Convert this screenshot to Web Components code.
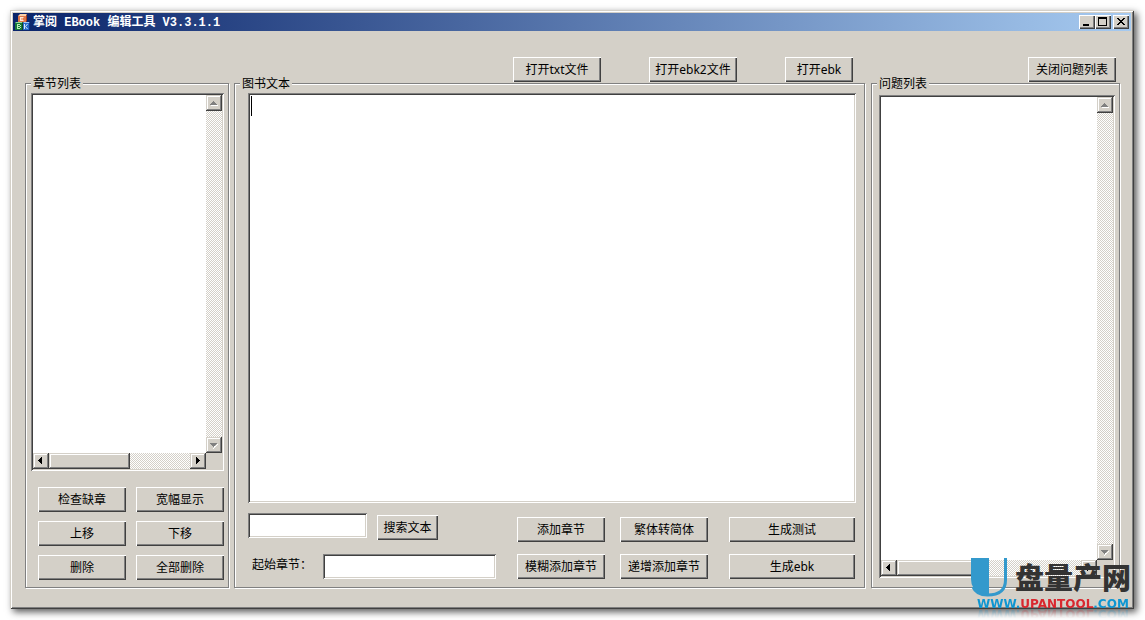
<!DOCTYPE html>
<html lang="zh-CN">
<head>
<meta charset="utf-8">
<title>掌阅 EBook 编辑工具 V3.3.1.1</title>
<style>
  body { margin: 0; background: #fff; color: #000; font: 12px/14px "Noto Sans", "Noto Sans CJK SC", sans-serif; }
</style>
</head>
<body>
<ebook-editor></ebook-editor>
<script>
const define = (name, html, setup) => {
  const template = document.createElement('template');
  template.innerHTML = html;
  customElements.define(name, class extends HTMLElement {
    constructor() {
      super();
      this.attachShadow({ mode: 'open' }).append(template.content.cloneNode(true));
    }
    connectedCallback() { if (setup) setup(this, this.shadowRoot); }
  });
};

/* Raised push button */
define('classic-button', `
  <style>
    :host { display: block; width: 88px; height: 25px; }
    button { display: flex; align-items: center; justify-content: center; box-sizing: border-box; width: 100%; height: 100%;
      margin: 0; padding: 0; border: 0; background: #d4d0c8; color: inherit; font: inherit; white-space: nowrap;
      box-shadow: inset 1px 1px #fff, inset -1px -1px #404040, inset -2px -2px #808080; }
  </style>
  <button type="button"><slot></slot></button>`);

/* Etched frame with a caption */
define('group-box', `
  <style>
    :host { display: flex; min-width: 0; }
    fieldset { flex: 1; display: flex; flex-direction: column; box-sizing: border-box; min-width: 0; margin: 0;
      padding: 0; border: 1px solid #808080; box-shadow: 1px 1px #fff, inset 1px 1px #fff; }
    legend { margin-left: 5px; padding: 0 2px; height: 13px; background: #d4d0c8; }
    .content { flex: 1; display: flex; flex-direction: column; min-width: 0; padding: var(--pad, 0); }
  </style>
  <fieldset><legend></legend><div class="content"><slot></slot></div></fieldset>`,
  (host, root) => { root.querySelector('legend').textContent = host.getAttribute('caption'); });

/* Scroll bar, vertical unless it has the "horizontal" attribute */
define('scroll-bar', `
  <style>
    :host { display: flex; flex-direction: column; width: 16px; color: #808080;
      background: conic-gradient(#fff 25%, #d4d0c8 0 50%, #fff 0 75%, #d4d0c8 0) 0 0 / 2px 2px; }
    :host([horizontal]) { flex-direction: row; width: auto; height: 16px; color: #000; }
    button, .thumb { box-sizing: border-box; margin: 0; padding: 0; border: 0; background: #d4d0c8; color: inherit;
      box-shadow: inset -1px -1px #404040, inset 1px 1px #d4d0c8, inset -2px -2px #808080, inset 2px 2px #fff; }
    button { flex: none; width: 16px; height: 16px; }
    svg { display: block; width: 16px; height: 16px; }
    .thumb { display: none; }
    :host([horizontal]) .thumb { display: block; width: 81px; }
    .space { flex: 1; }
    .v, :host([horizontal]) .h { display: block; }
    .h, :host([horizontal]) .v { display: none; }
  </style>
  <button type="button" aria-label="向前滚动">
    <svg viewBox="0 0 16 16" fill="currentColor" shape-rendering="crispEdges">
      <g class="v"><path d="M5 10h7v1H5z" fill="#fff"/><path d="M7 6h1v1H7zM6 7h3v1H6zM5 8h5v1H5zM4 9h7v1H4z"/></g>
      <g class="h"><path d="M5 7h1v1H5zM6 6h1v3H6zM7 5h1v5H7zM8 4h1v7H8z"/></g>
    </svg></button>
  <div class="thumb"></div><div class="space"></div>
  <button type="button" aria-label="向后滚动">
    <svg viewBox="0 0 16 16" fill="currentColor" shape-rendering="crispEdges">
      <g class="v"><path d="M11 7h1v1h-1v1h-1v1H9v1H8v1H7v-1h1V9h2V8h1z" fill="#fff"/><path d="M4 6h7v1H4zM5 7h5v1H5zM6 8h3v1H6zM7 9h1v1H7z"/></g>
      <g class="h"><path d="M6 4h1v7H6zM7 5h1v5H7zM8 6h1v3H8zM9 7h1v1H9z"/></g>
    </svg></button>`);

/* Sunken list with both scroll bars */
define('list-box', `
  <style>
    :host { display: grid; grid-template: 1fr 16px / 1fr 16px; box-sizing: border-box; padding: 2px; background: #d4d0c8;
      box-shadow: inset 1px 1px #808080, inset -1px -1px #fff, inset 2px 2px #404040, inset -2px -2px #d4d0c8; }
    .items { background: #fff; }
  </style>
  <div class="items" role="listbox"></div>
  <scroll-bar></scroll-bar>
  <scroll-bar horizontal></scroll-bar>`,
  (host, root) => root.querySelector('.items').setAttribute('aria-label', host.getAttribute('label')));

define('title-bar', `
  <style>
    :host { display: flex; align-items: center; height: 18px; padding: 0 2px; color: #fff;
      background: linear-gradient(90deg, #0a246a, #a6caf0); }
    .icon { width: 16px; height: 16px; }
    h1 { flex: 1; margin: 0 0 0 2px; padding-top: 2px; font: bold 12px/18px "Liberation Mono", "Noto Sans CJK SC", monospace; white-space: nowrap; }
    button { width: 16px; height: 14px; margin: 0; padding: 0; border: 0; background: #d4d0c8;
      box-shadow: inset 1px 1px #fff, inset -1px -1px #404040, inset -2px -2px #808080; }
    button svg { display: block; width: 16px; height: 14px; }
    button:last-child { margin-left: 2px; }
  </style>
  <svg class="icon" viewBox="0 0 16 16" aria-hidden="true">
    <path d="M3 2l2-2h7l-1 2z" fill="#fbd0a8"/><path d="M3 2h8v6H3z" fill="#e07848"/><path d="M11 2l1-2v7l-1 1z" fill="#a84020"/>
    <path d="M5.500 3v4M5 3.500h3.500M5 5h3M5 6.500h3.500" stroke="#ffe8d8" fill="none"/>
    <path d="M0 9l1-1h6l1 1z" fill="#8fdc98"/><path d="M0 9h7v7H0z" fill="#187838"/><path d="M7 9l1-1v7l-1 1z" fill="#0b4c20"/>
    <path d="M2.500 10v5M2 10.500h3M2 12.500h3M2 14.500h3M5.500 11v1M5.500 13v1" stroke="#b8f0b8" fill="none"/>
    <path d="M8 9l1-1h6l-1 1z" fill="#9cc8fc"/><path d="M8 9h6v7H8z" fill="#2468c8"/><path d="M14 9l1-1v7l-1 1z" fill="#0c3484"/>
    <path d="M9.500 10v5M12.500 10l-2 2.500 2 2.500" stroke="#d0e8ff" fill="none"/>
  </svg>
  <h1>掌阅 EBook 编辑工具 V3.3.1.1</h1>
  <button type="button" aria-label="最小化"><svg viewBox="0 0 16 14"><path d="M4 9h6v2H4z"/></svg></button>
  <button type="button" aria-label="最大化"><svg viewBox="0 0 16 14" shape-rendering="crispEdges"><path fill-rule="evenodd" d="M3 2h9v9H3zM4 4v6h7V4z"/></svg></button>
  <button type="button" aria-label="关闭"><svg viewBox="0 0 16 14" shape-rendering="crispEdges"><path d="M4 3h2v1H4zM10 3h2v1h-2zM5 4h2v1H5zM9 4h2v1H9zM6 5h4v1H6zM7 6h2v1H7zM6 7h4v1H6zM5 8h2v1H5zM9 8h2v1H9zM4 9h2v1H4zM10 9h2v1h-2z"/></svg></button>`);

define('text-pane', `
  <style>
    :host { display: flex; position: relative; }
    textarea { flex: 1; box-sizing: border-box; min-width: 0; margin: 0; padding: 3px; border: 0; outline: 0; resize: none;
      background: #fff; font: inherit;
      box-shadow: inset 1px 1px #808080, inset -1px -1px #fff, inset 2px 2px #404040, inset -2px -2px #d4d0c8; }
    .caret { position: absolute; left: 3px; top: 3px; width: 1px; height: 20px; background: #000; }
  </style>
  <textarea aria-label="图书文本"></textarea><span class="caret"></span>`);

define('search-form', `
  <style>
    :host { display: flex; justify-content: space-between; align-items: flex-end; }
    .fields { display: flex; flex-direction: column; gap: 14px; }
    .search { display: flex; gap: 10px; height: 27px; }
    .search classic-button { width: 61px; align-self: flex-end; }
    .start { display: flex; }
    label { box-sizing: border-box; width: 75px; padding: 4px 0 0 4px; white-space: nowrap; }
    input { box-sizing: border-box; height: 25px; width: 119px; margin: 0; padding: 2px 4px; border: 0; outline: 0; background: #fff; font: inherit;
      box-shadow: inset 1px 1px #808080, inset -1px -1px #fff, inset 2px 2px #404040, inset -2px -2px #d4d0c8; }
    .start input { width: 173px; }
    .actions { display: grid; grid-template-columns: 88px 88px 132px; gap: 12px 15px; }
    .wide { width: auto; margin-left: 6px; }
  </style>
  <div class="fields">
    <div class="search"><input type="text" aria-label="搜索文本"><classic-button>搜索文本</classic-button></div>
    <div class="start"><label for="start">起始章节：</label><input type="text" id="start"></div>
  </div>
  <div class="actions">
    <classic-button>添加章节</classic-button><classic-button>繁体转简体</classic-button><classic-button class="wide">生成测试</classic-button>
    <classic-button>模糊添加章节</classic-button><classic-button>递增添加章节</classic-button><classic-button class="wide">生成ebk</classic-button>
  </div>`);

/* Site logo lying over the lower right corner */
define('site-mark', `
  <style>
    :host { display: block; width: 162px; pointer-events: none; }
    .top { display: flex; align-items: flex-start; gap: 7px; }
    svg { flex: none; width: 37px; height: 39px; }
    .name { color: #333; font: 900 29px/36px "Noto Sans CJK SC", sans-serif; white-space: nowrap; }
    .url { display: flex; margin-left: 6px; color: #0e96d2; font: bold 12px/14px "DejaVu Sans", sans-serif;
      -webkit-box-reflect: below -4px linear-gradient(transparent 20%, rgba(0, 0, 0, .3)); }
    b { color: #d9272e; }
  </style>
  <div class="top">
    <svg viewBox="0 0 37 39" aria-hidden="true">
      <path d="M0 0h18v37q-5 0-9-2-9-4-9-14z" fill="#3399cc"/>
      <path d="M34.500 0v22c0 10-6 15-18 15C9 37 4 34 2 29" fill="none" stroke="#3399cc" stroke-width="3"/>
    </svg>
    <span class="name">盘量产网</span>
  </div>
  <div class="url"><span>WWW.</span><b>UPANTOOL</b><span>.COM</span></div>`);

define('ebook-editor', `
  <style>
    :host { display: flex; position: relative; box-sizing: border-box; min-height: 100vh; padding: 10px 11px 11px 10px; overflow: hidden; }
    .window { flex: 1; display: flex; flex-direction: column; box-sizing: border-box; min-width: 0; padding: 3px; background: #d4d0c8;
      box-shadow: inset 1px 1px #d4d0c8, inset -1px -1px #404040, inset 2px 2px #fff, inset -2px -2px #808080, 3px 3px 7px rgba(0, 0, 0, .65); }
    main { flex: 1; display: grid; grid-template: auto 1fr / 204px minmax(560px, 1fr) 249px; column-gap: 5px; padding: 26px 11px 18px 12px; }
    .open, .close { display: flex; justify-content: flex-end; height: 20px; }
    .open { grid-column: 2; gap: 48px; padding-right: 13px; }
    .open classic-button:last-child { width: 68px; }
    .close { padding-right: 4px; }
    .chapters { --pad: 3px 4px 7px 5px; }
    .book { --pad: 3px 8px 8px 13px; margin-right: 1px; }
    .issues { --pad: 5px 4px 9px 7px; }
    list-box, text-pane { flex: 1; }
    .buttons { display: grid; grid-template-columns: 88px 88px; gap: 9px 10px; padding: 16px 0 0 7px; }
    search-form { padding: 10px 1px 0 0; }
    site-mark { position: absolute; right: 12px; bottom: 9px; }
  </style>
  <div class="window">
    <title-bar></title-bar>
    <main>
      <div class="open"><classic-button>打开txt文件</classic-button><classic-button>打开ebk2文件</classic-button><classic-button>打开ebk</classic-button></div>
      <div class="close"><classic-button>关闭问题列表</classic-button></div>
      <group-box class="chapters" caption="章节列表">
        <list-box label="章节列表"></list-box>
        <div class="buttons">
          <classic-button>检查缺章</classic-button><classic-button>宽幅显示</classic-button>
          <classic-button>上移</classic-button><classic-button>下移</classic-button>
          <classic-button>删除</classic-button><classic-button>全部删除</classic-button>
        </div>
      </group-box>
      <group-box class="book" caption="图书文本">
        <text-pane></text-pane>
        <search-form></search-form>
      </group-box>
      <group-box class="issues" caption="问题列表">
        <list-box label="问题列表"></list-box>
      </group-box>
    </main>
  </div>
  <site-mark></site-mark>`);
</script>
</body>
</html>
